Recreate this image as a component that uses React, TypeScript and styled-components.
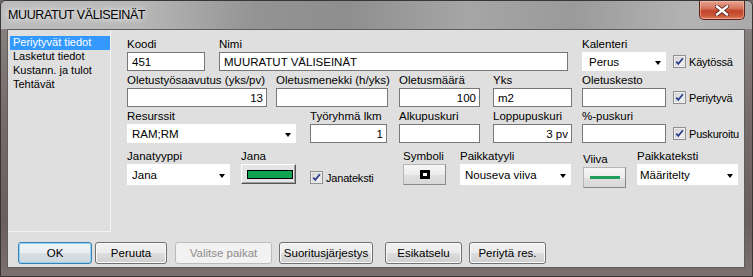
import React from "react"
import styled, { createGlobalStyle } from "styled-components"

const GlobalStyle = createGlobalStyle`
  html, body {
    margin: 0;
    padding: 0;
    background: #6f6868;
  }
  body {
    font-family: "Liberation Sans", Arial, sans-serif;
    font-size: 11.5px;
    color: #000;
  }
`

const Window = styled.div`
  width: 753px;
  height: 277px;
  box-sizing: border-box;
  display: flex;
  flex-direction: column;
  border: 1px solid #3b3535;
  border-radius: 6px 6px 0 0;
  overflow: hidden;
  background: linear-gradient(180deg, #8d8585 0%, #776c6c 40%, #6a5f5f 80%, #7b6f6f 100%);
`

const TitleBar = styled.div`
  height: 28px;
  flex-shrink: 0;
  display: flex;
  justify-content: space-between;
  align-items: flex-start;
  background: linear-gradient(90deg, #bcbcbc 0%, #b8b8b8 18%, #939393 34%, #8e8e8e 46%, #a6a6a6 62%, #9a9a9a 76%, #b4b4b4 92%, #a9a9a9 100%);
`

const Title = styled.div`
  margin: 7px 0 0 7px;
  font-size: 12.5px;
  letter-spacing: -0.4px;
  line-height: 14px;
  text-shadow: 0 0 6px rgba(255, 255, 255, 0.95), 0 0 10px rgba(255, 255, 255, 0.7);
`

const CloseButton = styled.div`
  width: 46px;
  height: 19px;
  margin-right: 7px;
  box-sizing: border-box;
  border: 1px solid #5e2318;
  border-top: none;
  border-radius: 0 0 5px 5px;
  display: flex;
  align-items: center;
  justify-content: center;
  background: linear-gradient(180deg, #e7a391 0%, #d5765f 40%, #c2452c 55%, #cf5a3c 85%, #e28a68 100%);
  box-shadow: inset 0 0 0 1px rgba(255, 200, 180, 0.5);
`

const Content = styled.div`
  flex: 1;
  margin: 0 7px 8px 6px;
  background: #dfdfdf;
  border: 1px solid #5d5d5d;
  display: flex;
  flex-direction: column;
`

const Main = styled.div`
  display: flex;
  height: 202px;
`

const ListBox = styled.div`
  width: 100px;
  box-sizing: content-box;
  padding: 6px 0 0 2px;
  border-right: 1px solid #f3f3f3;
  border-bottom: 1px solid #f3f3f3;
`

const ListItem = styled.div<{ $selected?: boolean }>`
  height: 14px;
  line-height: 13px;
  font-size: 11px;
  padding-left: 3px;
  white-space: nowrap;
  background: ${p => (p.$selected ? "#3399ff" : "transparent")};
  color: ${p => (p.$selected ? "#fff" : "#000")};
`

const Form = styled.div`
  padding: 7px 0 0 16px;
  display: flex;
  flex-direction: column;
  gap: 2px;
`

const Row = styled.div<{ $mt?: number }>`
  display: flex;
  align-items: flex-start;
  margin-top: ${p => p.$mt ?? 0}px;
`

const Field = styled.div<{ $w: number; $ml?: number; $mt?: number }>`
  width: ${p => p.$w}px;
  margin-left: ${p => p.$ml ?? 0}px;
  margin-top: ${p => p.$mt ?? 0}px;
  display: flex;
  flex-direction: column;
  flex-shrink: 0;
`

const Label = styled.div`
  height: 14px;
  line-height: 14px;
  margin-bottom: 1px;
  white-space: nowrap;
`

const TextBox = styled.input<{ $right?: boolean }>`
  height: 19px;
  width: 100%;
  box-sizing: border-box;
  margin: 0;
  padding: 0 3px 0 4px;
  border: 1px solid #777;
  border-radius: 0;
  background: #fff;
  font-family: "Liberation Sans", Arial, sans-serif;
  font-size: 11.5px;
  color: #000;
  text-align: ${p => (p.$right ? "right" : "left")};
  outline: none;
`

const Select = styled.div<{ $h?: number; $pl?: number }>`
  height: ${p => p.$h ?? 19}px;
  box-sizing: border-box;
  background: #fff;
  display: flex;
  align-items: center;
  justify-content: space-between;
  padding: 0 5px 0 ${p => p.$pl ?? 5}px;
  white-space: nowrap;
`

const Arrow = styled.span`
  width: 0;
  height: 0;
  border-left: 3.5px solid transparent;
  border-right: 3.5px solid transparent;
  border-top: 4px solid #000;
  margin-top: 2px;
`

const CheckField = styled.label<{ $ml?: number; $h?: number; $w?: number }>`
  margin-left: ${p => p.$ml ?? 0}px;
  width: ${p => (p.$w ? `${p.$w}px` : "auto")};
  height: ${p => p.$h ?? 19}px;
  align-self: flex-end;
  display: flex;
  align-items: center;
  gap: 3px;
  flex-shrink: 0;
  white-space: nowrap;
  font-size: 11px;
  letter-spacing: -0.2px;
`

const ClassicButton = styled.div<{ $h?: number }>`
  height: ${p => p.$h ?? 20}px;
  box-sizing: border-box;
  display: flex;
  align-items: center;
  justify-content: center;
  background: #e4e4e4;
  border-top: 1px solid #fff;
  border-left: 1px solid #fff;
  border-right: 1px solid #555;
  border-bottom: 1px solid #555;
  box-shadow: inset -1px -1px 0 #a0a0a0;
`

const AeroSmallButton = styled.div<{ $h?: number }>`
  height: ${p => p.$h ?? 20}px;
  box-sizing: border-box;
  display: flex;
  align-items: center;
  justify-content: center;
  border: 1px solid #b5b5b5;
  border-right-color: #8a8a8a;
  border-bottom-color: #8a8a8a;
  background: linear-gradient(180deg, #f7f7f7 0%, #ececec 50%, #e0e0e0 51%, #d8d8d8 100%);
`

const ColorBar = styled.div<{ $color: string }>`
  width: 46px;
  height: 9px;
  box-sizing: border-box;
  border: 1px solid #000;
  background: ${p => p.$color};
  margin: 1px 0 0 2px;
`

const SymbolBox = styled.div`
  width: 10px;
  height: 9px;
  box-sizing: border-box;
  border: 3px solid #000;
  background: #fff;
`

const LineSample = styled.div<{ $color: string }>`
  width: 30px;
  height: 3px;
  background: ${p => p.$color};
`

const Footer = styled.div`
  display: flex;
  align-items: center;
  padding: 10px 0 0 10px;
`

const Button = styled.div<{ $w: number; $ml?: number; $variant?: "default" | "disabled" }>`
  width: ${p => p.$w}px;
  height: 22px;
  margin-left: ${p => p.$ml ?? 0}px;
  box-sizing: border-box;
  border-radius: 3px;
  display: flex;
  align-items: center;
  justify-content: center;
  white-space: nowrap;
  border: 1px solid ${p =>
    p.$variant === "default" ? "#3c7fb1" : p.$variant === "disabled" ? "#b8bcbf" : "#707070"};
  color: ${p => (p.$variant === "disabled" ? "#8d8d8d" : "#000")};
  background: ${p =>
    p.$variant === "disabled"
      ? "#f2f2f2"
      : p.$variant === "default"
      ? "linear-gradient(180deg, #f1f5f8 0%, #e8eef2 50%, #d8e0e5 51%, #ccd6dc 100%)"
      : "linear-gradient(180deg, #f2f2f2 0%, #ebebeb 50%, #dddddd 51%, #cfcfcf 100%)"};
  box-shadow: ${p =>
    p.$variant === "default"
      ? "inset 0 0 0 1px #8fd3f2"
      : p.$variant === "disabled"
      ? "none"
      : "inset 0 0 0 1px #fbfbfb"};
`

const CloseIcon = () => (
  <svg width="14" height="11" viewBox="0 0 14 11">
    <path d="M2 1.5 L12 9.5 M12 1.5 L2 9.5" stroke="#4a1a12" strokeWidth="4" strokeLinecap="square" />
    <path d="M2 1.5 L12 9.5 M12 1.5 L2 9.5" stroke="#fff" strokeWidth="2.4" strokeLinecap="square" />
  </svg>
)

const CheckIcon = () => (
  <svg width="13" height="13" viewBox="0 0 13 13">
    <defs>
      <linearGradient id="cbg" x1="0" y1="0" x2="1" y2="1">
        <stop offset="0" stopColor="#d8d8d8" />
        <stop offset="1" stopColor="#f8f8f8" />
      </linearGradient>
    </defs>
    <rect x="0.5" y="0.5" width="12" height="12" fill="#fff" stroke="#8e8f8f" />
    <rect x="2" y="2" width="9" height="9" fill="url(#cbg)" stroke="#c4c4c4" strokeWidth="0.6" />
    <path d="M3.3 6.6 L5.3 8.9 L9.9 3.2" fill="none" stroke="#2b3f8c" strokeWidth="1.8" />
  </svg>
)

const Check = ({ text, ml, h, w }: { text: string; ml?: number; h?: number; w?: number }) => (
  <CheckField $ml={ml} $h={h} $w={w}>
    <CheckIcon />
    <span>{text}</span>
  </CheckField>
)

const App: React.FC = () => {
  return (
    <>
      <GlobalStyle />
      <Window>
        <TitleBar>
          <Title>MUURATUT VÄLISEINÄT</Title>
          <CloseButton>
            <CloseIcon />
          </CloseButton>
        </TitleBar>
        <Content>
          <Main>
            <ListBox>
              <ListItem $selected>Periytyvät tiedot</ListItem>
              <ListItem>Lasketut tiedot</ListItem>
              <ListItem>Kustann. ja tulot</ListItem>
              <ListItem>Tehtävät</ListItem>
            </ListBox>
            <Form>
              <Row>
                <Field $w={78}>
                  <Label>Koodi</Label>
                  <TextBox readOnly value="451" />
                </Field>
                <Field $w={349} $ml={14}>
                  <Label>Nimi</Label>
                  <TextBox readOnly value="MUURATUT VÄLISEINÄT" />
                </Field>
                <Field $w={84} $ml={14}>
                  <Label>Kalenteri</Label>
                  <Select $pl={7}>
                    Perus
                    <Arrow />
                  </Select>
                </Field>
                <Check text="Käytössä" ml={7} />
              </Row>
              <Row>
                <Field $w={140}>
                  <Label>Oletustyösaavutus (yks/pv)</Label>
                  <TextBox readOnly $right value="13" />
                </Field>
                <Field $w={112} $ml={9}>
                  <Label>Oletusmenekki (h/yks)</Label>
                  <TextBox readOnly value="" />
                </Field>
                <Field $w={81} $ml={11}>
                  <Label>Oletusmäärä</Label>
                  <TextBox readOnly $right value="100" />
                </Field>
                <Field $w={79} $ml={13}>
                  <Label>Yks</Label>
                  <TextBox readOnly value="m2" />
                </Field>
                <Field $w={84} $ml={10}>
                  <Label>Oletuskesto</Label>
                  <TextBox readOnly value="" />
                </Field>
                <Check text="Periytyvä" ml={7} />
              </Row>
              <Row>
                <Field $w={169}>
                  <Label>Resurssit</Label>
                  <Select>
                    RAM;RM
                    <Arrow />
                  </Select>
                </Field>
                <Field $w={77} $ml={14}>
                  <Label>Työryhmä lkm</Label>
                  <TextBox readOnly $right value="1" />
                </Field>
                <Field $w={81} $ml={12}>
                  <Label>Alkupuskuri</Label>
                  <TextBox readOnly value="" />
                </Field>
                <Field $w={79} $ml={13}>
                  <Label>Loppupuskuri</Label>
                  <TextBox readOnly $right value="3 pv" />
                </Field>
                <Field $w={84} $ml={10}>
                  <Label>%-puskuri</Label>
                  <TextBox readOnly value="" />
                </Field>
                <Check text="Puskuroitu" ml={7} />
              </Row>
              <Row $mt={4}>
                <Field $w={103}>
                  <Label>Janatyyppi</Label>
                  <Select $h={21}>
                    Jana
                    <Arrow />
                  </Select>
                </Field>
                <Field $w={55} $ml={11}>
                  <Label>Jana</Label>
                  <ClassicButton>
                    <ColorBar $color="#0fa452" />
                  </ClassicButton>
                </Field>
                <Check text="Janateksti" ml={14} h={21} w={93} />
                <Field $w={43}>
                  <Label>Symboli</Label>
                  <AeroSmallButton $h={21}>
                    <SymbolBox />
                  </AeroSmallButton>
                </Field>
                <Field $w={111} $ml={14}>
                  <Label>Paikkatyyli</Label>
                  <Select $h={21}>
                    Nouseva viiva
                    <Arrow />
                  </Select>
                </Field>
                <Field $w={43} $ml={12} $mt={3}>
                  <Label>Viiva</Label>
                  <AeroSmallButton $h={21}>
                    <LineSample $color="#1f9d5c" />
                  </AeroSmallButton>
                </Field>
                <Field $w={101} $ml={11}>
                  <Label>Paikkateksti</Label>
                  <Select $h={21} $pl={3}>
                    Määritelty
                    <Arrow />
                  </Select>
                </Field>
              </Row>
            </Form>
          </Main>
          <Footer>
            <Button $w={74} $variant="default">OK</Button>
            <Button $w={72} $ml={3}>Peruuta</Button>
            <Button $w={97} $ml={8} $variant="disabled">Valitse paikat</Button>
            <Button $w={94} $ml={7}>Suoritusjärjestys</Button>
            <Button $w={77} $ml={12}>Esikatselu</Button>
            <Button $w={77} $ml={7}>Periytä res.</Button>
          </Footer>
        </Content>
      </Window>
    </>
  )
}

export default App
